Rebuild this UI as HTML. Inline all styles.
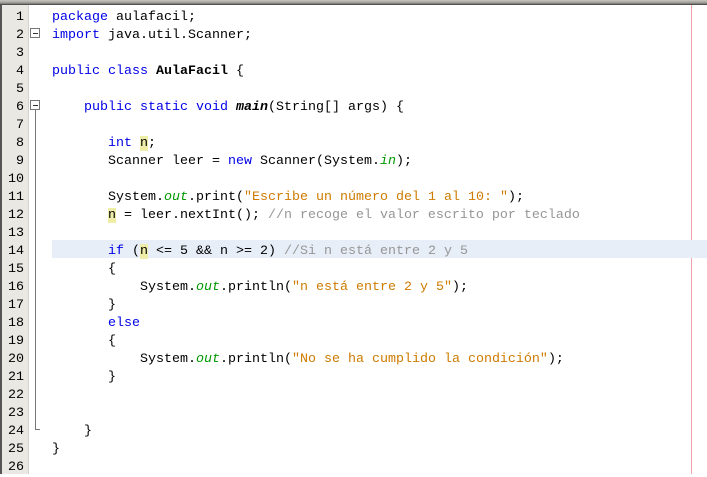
<!DOCTYPE html>
<html><head><meta charset="utf-8"><style>
html,body{margin:0;padding:0;}
body{width:707px;height:474px;overflow:hidden;background:#fff;position:relative;font-family:"Liberation Mono","DejaVu Sans Mono","Courier New",Courier,monospace;font-size:13.33px;}
.top{position:absolute;left:0;top:0;width:707px;height:5px;background:linear-gradient(#c8c6c0,#9a9892 60%,#3a3a3a);}
.gut{position:absolute;left:0;top:5px;width:28px;height:469px;background:#e9e8e2;border-left:2px solid #555;box-sizing:border-box;}
.gline{position:absolute;left:28px;top:5px;width:1px;height:469px;background:#d4d2cc;}
.margin{position:absolute;left:691px;top:5px;width:1px;height:469px;background:#f4a0a8;}
.num{position:absolute;width:24px;text-align:right;left:0;color:#000;line-height:18px;font-family:"Liberation Mono","DejaVu Sans Mono",monospace;}
.l{position:absolute;white-space:pre;line-height:18px;color:#000;font-family:"Liberation Mono","DejaVu Sans Mono",monospace;}
.k{color:#0000e6}.s{color:#ce7b00}.c{color:#969696}.f{color:#009900;font-style:italic}
.b{font-weight:bold}.bi{font-weight:bold;font-style:italic}
.h{background:#eeeea8}
.hl{position:absolute;left:52px;top:240px;width:655px;height:18px;background:#e8eef8;}
.fold{position:absolute;left:30px;width:8px;height:8px;border:1px solid #777;background:#fff;}
.fold:after{content:"";position:absolute;left:2px;top:4px;width:5px;height:1px;background:#333;}
.vl{position:absolute;left:35px;width:1px;background:#777;}
.t{position:absolute;left:0;top:3px;width:707px;height:474px;}
</style></head><body>
<div class="top"></div>
<div class="gut"></div><div class="gline"></div><div class="margin"></div>
<div class="hl"></div>
<div class="fold" style="top:28px"></div>
<div class="fold" style="top:100px"></div>
<div class="vl" style="top:110px;height:319px"></div>
<div style="position:absolute;left:35px;top:429px;width:5px;height:1px;background:#777"></div>
<div class="t">
<div class="num" style="top:6px">1</div><div class="num" style="top:24px">2</div><div class="num" style="top:42px">3</div><div class="num" style="top:60px">4</div><div class="num" style="top:78px">5</div><div class="num" style="top:96px">6</div><div class="num" style="top:114px">7</div><div class="num" style="top:132px">8</div><div class="num" style="top:150px">9</div><div class="num" style="top:168px">10</div><div class="num" style="top:186px">11</div><div class="num" style="top:204px">12</div><div class="num" style="top:222px">13</div><div class="num" style="top:240px">14</div><div class="num" style="top:258px">15</div><div class="num" style="top:276px">16</div><div class="num" style="top:294px">17</div><div class="num" style="top:312px">18</div><div class="num" style="top:330px">19</div><div class="num" style="top:348px">20</div><div class="num" style="top:366px">21</div><div class="num" style="top:384px">22</div><div class="num" style="top:402px">23</div><div class="num" style="top:420px">24</div><div class="num" style="top:438px">25</div><div class="num" style="top:456px">26</div>
<div class="l" style="left:52px;top:6px"><span class="k">package</span> aulafacil;</div>
<div class="l" style="left:52px;top:24px"><span class="k">import</span> java.util.Scanner;</div>
<div class="l" style="left:52px;top:60px"><span class="k">public class</span> <span class="b">AulaFacil</span> {</div>
<div class="l" style="left:84px;top:96px"><span class="k">public static void</span> <span class="bi">main</span>(String[] args) {</div>
<div class="l" style="left:108px;top:132px"><span class="k">int</span> <span class="h">n</span>;</div>
<div class="l" style="left:108px;top:150px">Scanner leer = <span class="k">new</span> Scanner(System.<span class="f">in</span>);</div>
<div class="l" style="left:108px;top:186px">System.<span class="f">out</span>.print(<span class="s">"Escribe un número del 1 al 10: "</span>);</div>
<div class="l" style="left:108px;top:204px"><span class="h">n</span> = leer.nextInt(); <span class="c">//n recoge el valor escrito por teclado</span></div>
<div class="l" style="left:108px;top:240px"><span class="k">if</span> (<span class="h">n</span> &lt;= 5 &amp;&amp; n &gt;= 2) <span class="c">//Si n está entre 2 y 5</span></div>
<div class="l" style="left:108px;top:258px">{</div>
<div class="l" style="left:140px;top:276px">System.<span class="f">out</span>.println(<span class="s">"n está entre 2 y 5"</span>);</div>
<div class="l" style="left:108px;top:294px">}</div>
<div class="l" style="left:108px;top:312px"><span class="k">else</span></div>
<div class="l" style="left:108px;top:330px">{</div>
<div class="l" style="left:140px;top:348px">System.<span class="f">out</span>.println(<span class="s">"No se ha cumplido la condición"</span>);</div>
<div class="l" style="left:108px;top:366px">}</div>
<div class="l" style="left:84px;top:420px">}</div>
<div class="l" style="left:52px;top:438px">}</div>
</div>
</body></html>
